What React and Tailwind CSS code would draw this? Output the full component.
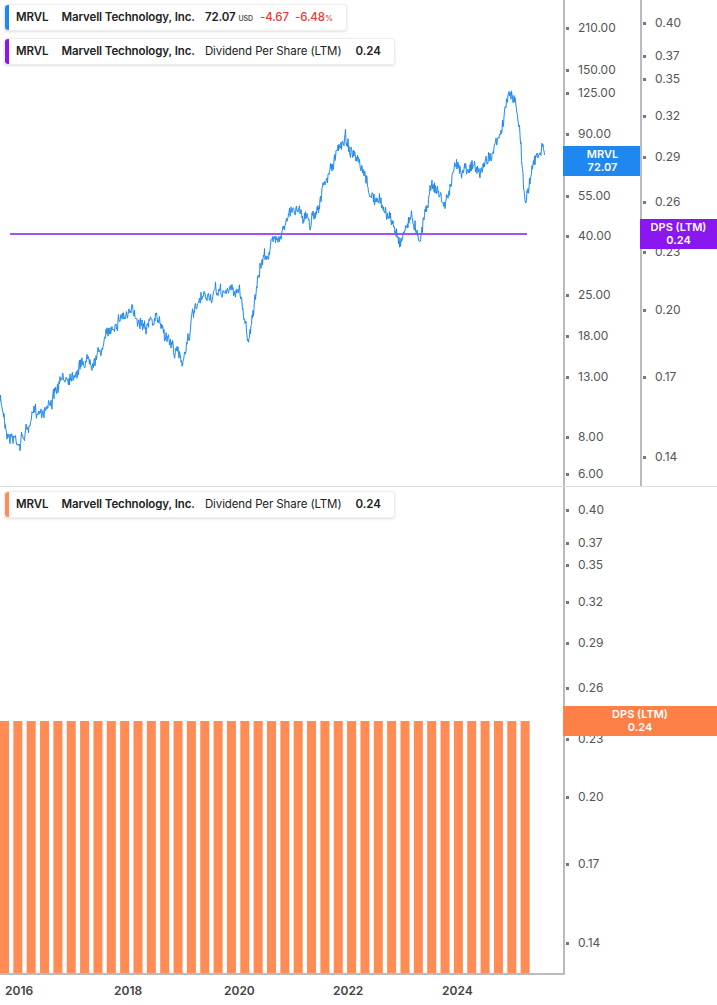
import React from 'react';

const font = { fontFamily: 'Inter, "Liberation Sans", sans-serif' };

const keys = [[0,400],[8,432],[20,440],[35,415],[50,400],[65,380],[80,362],[100,350],[120,312],[140,318],[160,322],[172,345],[182,362],[192,318],[205,300],[225,292],[240,290],[248,338],[255,300],[262,262],[280,230],[298,205],[310,222],[325,185],[345,135],[355,160],[370,195],[385,210],[400,240],[410,215],[420,235],[427,200],[432,180],[445,205],[455,170],[470,162],[480,175],[492,150],[500,140],[508,95],[515,100],[520,130],[523,175],[526,205],[530,175],[537,158],[543,150],[545,160]];

function buildPath() {
  let seed = 7;
  const rnd = () => { seed = (seed * 16807) % 2147483647; return seed / 2147483647 - 0.5; };
  const pts = [];
  let drift = 0;
  for (let i = 0; i < keys.length - 1; i++) {
    const [x0, y0] = keys[i], [x1, y1] = keys[i + 1];
    for (let x = x0; x < x1; x += 0.5) {
      const t = (x - x0) / (x1 - x0);
      drift = drift * 0.9 + rnd() * 6;
      pts.push([x, y0 + (y1 - y0) * t + drift + rnd() * 10]);
    }
  }
  return 'M' + pts.map(p => p[0].toFixed(1) + ',' + p[1].toFixed(1)).join('L');
}
const pricePath = buildPath();

const priceTicks = [['210.00',27],['150.00',69],['125.00',92],['90.00',133],['55.00',195],['40.00',235],['25.00',294],['18.00',335],['13.00',376],['8.00',436],['6.00',473]];
const dpsTicks = [['0.40',22],['0.37',55],['0.35',78],['0.32',115],['0.29',156],['0.26',201],['0.23',251],['0.20',309],['0.17',376],['0.14',456]];
const dpsBottom = [['0.40',22],['0.37',55],['0.35',77],['0.32',114],['0.29',155],['0.26',200],['0.23',251],['0.20',309],['0.17',376],['0.14',455]];
const years = [['2016',19],['2018',128],['2020',238],['2022',347],['2024',456]];

const Tick = ({ label, y }) => (
  <div className="absolute left-0 flex items-center text-[12px] text-[#555]" style={{ top: y - 8 }}>
    <span className="w-[3px] h-[3px] bg-[#777] mr-[9px] ml-[1px]" />
    {label}
  </div>
);

const Legend = ({ color, children }) => (
  <div className="flex items-center h-[27px] bg-white border border-[#eee] rounded-[3px] shadow-sm pr-[13px] text-[11.5px] tracking-[-0.1px] text-[#222] w-fit">
    <span className="w-[4px] h-full rounded-l-[3px] mr-[7px]" style={{ background: color }} />
    {children}
  </div>
);

export default function App() {
  const bars = Array.from({ length: 40 }, (_, i) => i * 13.35);
  return (
    <div className="w-[717px] h-[1005px] bg-white relative overflow-hidden" style={font}>
      {/* top panel */}
      <div className="flex h-[487px] border-b border-[#ddd]">
        <div className="relative w-[563px]">
          <svg width="563" height="487" className="absolute inset-0">
            <line x1="10" y1="234" x2="527" y2="234" stroke="#8a16f0" strokeWidth="1.3" />
            <path d={pricePath} fill="none" stroke="#1e88f0" strokeWidth="1" />
          </svg>
          <div className="absolute left-[4px] top-[4px] flex flex-col gap-[7px]">
            <Legend color="#1e88f0">
              <b className="font-semibold mr-[13px]">MRVL</b>
              <b className="font-semibold mr-[10px]">Marvell Technology, Inc.</b>
              <b className="font-semibold">72.07</b>
              <span className="text-[7px] font-semibold text-[#555] ml-[3px] mt-[3px]">USD</span>
              <span className="text-[#e53935] font-medium ml-[7px]">-4.67</span>
              <span className="text-[#e53935] font-medium ml-[6px]">-6.48<span className="text-[8px]">%</span></span>
            </Legend>
            <Legend color="#8a16f0">
              <b className="font-semibold mr-[13px]">MRVL</b>
              <b className="font-semibold mr-[10px]">Marvell Technology, Inc.</b>
              <span className="mr-[14px]">Dividend Per Share (LTM)</span>
              <b className="font-semibold">0.24</b>
            </Legend>
          </div>
        </div>
        <div className="relative w-[77px] border-l-2 border-[#bbb]">
          {priceTicks.map(([l, y]) => <Tick key={l} label={l} y={y} />)}
          <div className="absolute -left-[2px] w-[79px] top-[146px] h-[30px] bg-[#1e88f0] text-white text-[11px] font-semibold leading-[13px] flex flex-col items-center justify-center">
            <span>MRVL</span><span>72.07</span>
          </div>
        </div>
        <div className="relative flex-1 border-l-2 border-[#bbb]">
          {dpsTicks.map(([l, y]) => <Tick key={l} label={l} y={y} />)}
          <div className="absolute -left-[2px] right-0 top-[219px] h-[30px] bg-[#8a16f0] text-white text-[11px] font-semibold leading-[13px] flex flex-col items-center justify-center">
            <span>DPS (LTM)</span><span>0.24</span>
          </div>
        </div>
      </div>
      {/* bottom panel */}
      <div className="flex h-[488px]">
        <div className="relative w-[563px] border-b-2 border-[#bbb]">
          <svg width="563" height="486" className="absolute inset-0">
            {bars.map(x => <rect key={x} x={x} y="234" width="9" height="252" fill="#ff8c55" />)}
          </svg>
          <div className="absolute left-[4px] top-[4px]">
            <Legend color="#ff8c55">
              <b className="font-semibold mr-[13px]">MRVL</b>
              <b className="font-semibold mr-[10px]">Marvell Technology, Inc.</b>
              <span className="mr-[14px]">Dividend Per Share (LTM)</span>
              <b className="font-semibold">0.24</b>
            </Legend>
          </div>
        </div>
        <div className="relative flex-1 border-l-2 border-[#bbb] h-[488px]">
          {dpsBottom.map(([l, y]) => <Tick key={l} label={l} y={y} />)}
          <div className="absolute -left-[2px] right-0 top-[219px] h-[30px] bg-[#ff8047] text-white text-[11px] font-semibold leading-[13px] flex flex-col items-center justify-center">
            <span>DPS (LTM)</span><span>0.24</span>
          </div>
        </div>
      </div>
      <div className="relative h-[30px] w-[563px] text-[12px] font-semibold text-[#444]">
        {years.map(([l, x]) => (
          <span key={l} className="absolute top-[7px]" style={{ left: x - 14 }}>{l}</span>
        ))}
      </div>
    </div>
  );
}
